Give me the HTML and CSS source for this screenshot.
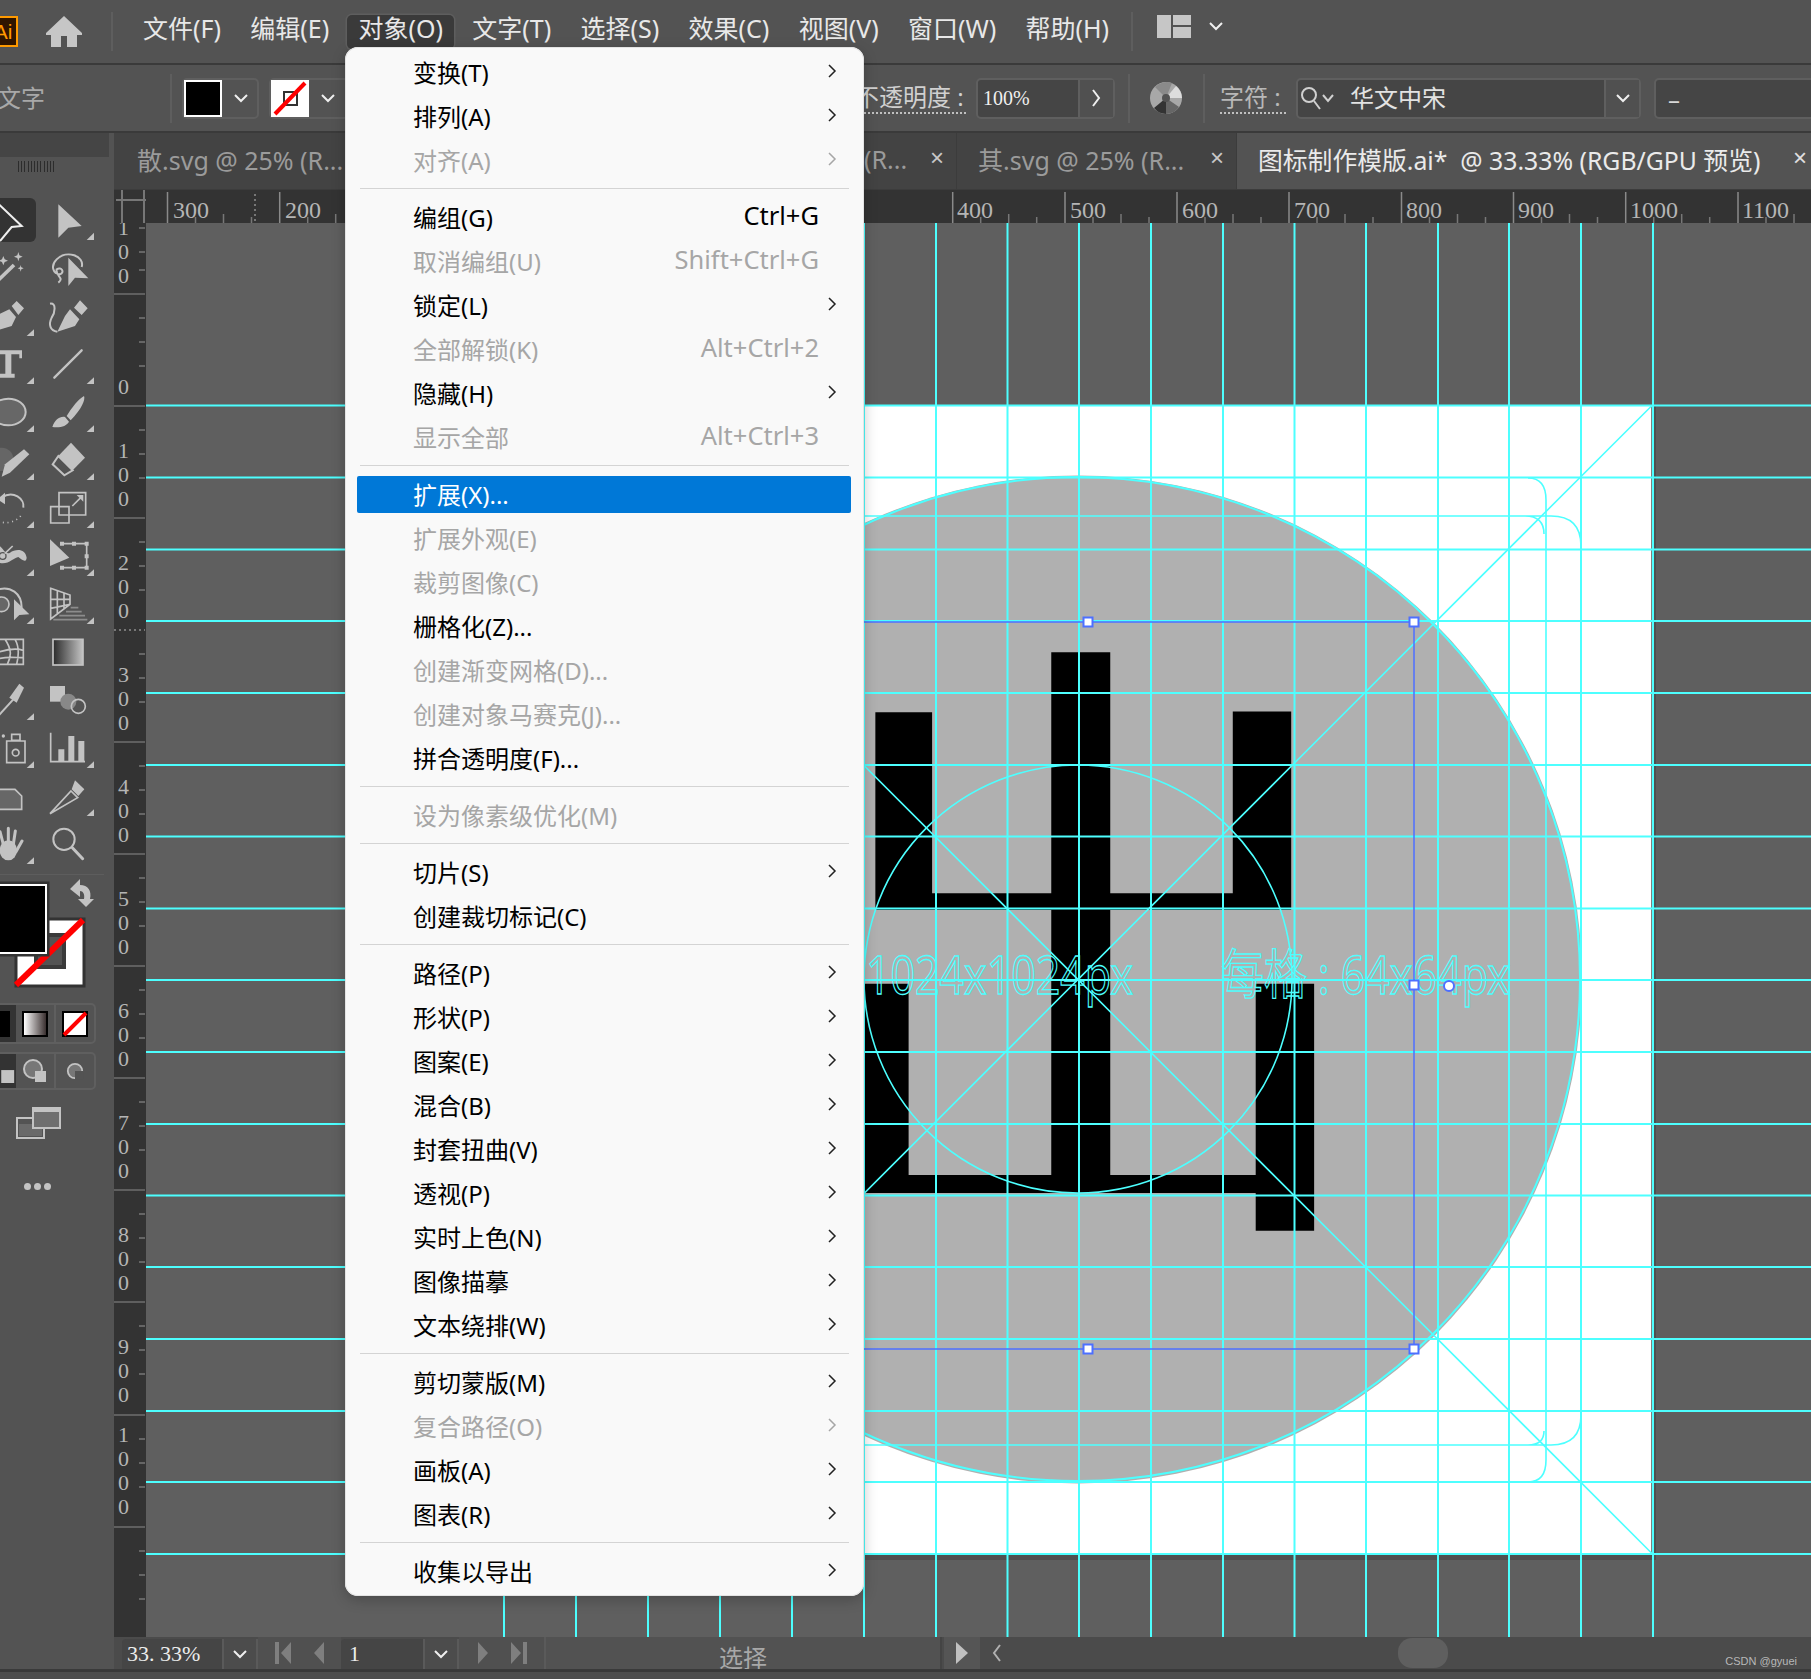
FILE: index.html
```html
<!DOCTYPE html>
<html lang="zh-CN">
<head>
<meta charset="utf-8">
<title>Illustrator</title>
<link rel="stylesheet" href="styles.css">
</head>
<body>
<div class="app">
  <svg class="defs" width="0" height="0"><filter id="glyph-shape" x="-10%" y="-10%" width="120%" height="120%"><feMorphology operator="erode" radius="0 16" result="a"/><feMorphology in="a" operator="dilate" radius="7 0"/></filter></svg>
  <header class="menubar">
    <div class="ai-logo"><span>Ai</span></div>
    <svg class="home" viewBox="0 0 36 31"><path d="M18 0 36 17 V19 H31 V31 H21 V20 H15 V31 H5 V19 H0 V17Z"/></svg>
    <span class="vdiv tall"></span>
    <nav class="menus">
      <span>文件(F)</span><span>编辑(E)</span><span class="open">对象(O)</span><span>文字(T)</span><span>选择(S)</span><span>效果(C)</span><span>视图(V)</span><span>窗口(W)</span><span>帮助(H)</span>
    </nav>
    <span class="vdiv tall after-menus"></span>
    <svg class="layout" viewBox="0 0 34 23"><path d="M0 0H14V23H0ZM16 0H34V10H16ZM16 12H34V23H16Z"/></svg>
    <svg class="chev top-chev" viewBox="0 0 14 9"><path d="M1 1 7 7 13 1"/></svg>
  </header>

  <section class="controlbar">
    <span class="ctl-text">文字</span>
    <span class="vdiv ctl-div first"></span>
    <div class="swatch-group">
      <span class="swatch fill-black"></span>
      <svg class="chev" viewBox="0 0 14 9"><path d="M1 1 7 7 13 1"/></svg>
    </div>
    <div class="swatch-group stroke-group">
      <svg class="swatch-svg" viewBox="0 0 38 37"><rect width="38" height="37" fill="#fff"/><rect x="13" y="12" width="13" height="13" fill="none" stroke="#333" stroke-width="2"/><path d="M4 34 34 3" stroke="#f00" stroke-width="4"/></svg>
      <svg class="chev" viewBox="0 0 14 9"><path d="M1 1 7 7 13 1"/></svg>
    </div>
    <span class="ctl-label opacity-label"><span>不透明度 :</span></span>
    <div class="field opacity-field">
      <span class="field-value">100%</span>
      <span class="field-btn"><svg class="chev-r" viewBox="0 0 9 18"><path d="M1 1 7 9 1 17"/></svg></span>
    </div>
    <span class="vdiv ctl-div"></span>
    <svg class="globe" viewBox="0 0 32 32">
      <circle cx="16" cy="16" r="16" fill="#a8a8a8"/>
      <path d="M16 16 L4 26 A16 16 0 0 0 16 32Z" fill="#333"/>
      <path d="M16 16 L32 16 A16 16 0 0 0 26 4Z" fill="#ddd"/>
      <path d="M16 16 L16 32 A16 16 0 0 0 29 25Z" fill="#666"/>
      <path d="M16 16 L5 5 A16 16 0 0 1 22 1Z" fill="#8a8a8a"/>
      <circle cx="16" cy="16" r="4" fill="#535353"/>
    </svg>
    <span class="vdiv ctl-div"></span>
    <span class="ctl-label char-label"><span>字符 :</span></span>
    <div class="field font-field">
      <svg class="search" viewBox="0 0 36 24"><circle cx="9" cy="9" r="7"/><path d="M14 15 20 23M23 9 28 15 33 9"/></svg>
      <span class="font-name">华文中宋</span>
      <span class="field-btn"><svg class="chev" viewBox="0 0 14 9"><path d="M1 1 7 7 13 1"/></svg></span>
    </div>
    <div class="field style-field"><span class="dash">–</span></div>
  </section>

  <div class="workspace">
    <aside class="toolbar">
      <div class="tool-head"></div>
      <div class="grip"></div>
      <div class="tools">
        <div class="tool selected"><svg viewBox="-66 21 174 132"><path class="ln light" d="M-14 30 65 105 35 108 0 150"/></svg></div>
        <div class="tool"><svg viewBox="114 21 174 132"><path class="fl" d="M175 40 245 105 205 110 175 140Z"/><path class="fl" d="M282 125V147H260Z"/></svg></div>

        <div class="tool"><svg viewBox="-66 165 174 132"><path class="ln thick" d="M-8 270 42 222"/><path class="fl" d="M10 195 14 205 24 209 14 213 10 223 6 213-4 209 6 205ZM55 183 58 193 68 197 58 201 55 211 52 201 42 197 52 193ZM62 222 64 229 71 232 64 235 62 242 60 235 53 232 60 229Z"/></svg></div>
        <div class="tool"><svg viewBox="114 165 174 132"><path class="ln" d="M245 228C255 195 200 175 170 205 150 225 160 250 180 250 195 245 185 225 170 235 165 255 195 260 175 275"/><path class="fl" d="M205 200 265 262 225 260 205 285Z"/></svg></div>

        <div class="tool"><svg viewBox="-66 309 174 132"><path class="fl" d="M35 345 50 330 72 352 55 372ZM-15 375 28 355 48 378 35 405-15 420Z"/><path class="fl" d="M102 415V435H80Z"/></svg></div>
        <div class="tool"><svg viewBox="114 309 174 132"><path class="fl" d="M222 350 240 328 263 352 245 372ZM210 355 238 385 225 405 172 422 195 375Z"/><path class="ln" d="M150 338C170 335 165 365 155 380 145 400 150 420 172 422"/></svg></div>

        <div class="tool"><svg viewBox="-66 453 174 132"><path class="fl" d="M-20 478H66V502H58V490H34V548H44V560H-5V548H16V490H-5V502H-20Z"/><path class="fl" d="M102 559V579H80Z"/></svg></div>
        <div class="tool"><svg viewBox="114 453 174 132"><path class="ln round" d="M163 560 245 478"/><path class="fl" d="M282 559V579H260Z"/></svg></div>

        <div class="tool"><svg viewBox="-66 597 174 132"><ellipse class="ln-fill" cx="25" cy="663" rx="52" ry="40"/><path class="fl" d="M102 703V723H80Z"/></svg></div>
        <div class="tool"><svg viewBox="114 597 174 132"><path class="fl" d="M157 708C165 685 180 675 195 678L207 692C200 705 180 712 157 708ZM200 675C215 650 235 625 252 615 257 625 245 655 212 688Z"/><path class="fl" d="M282 703V723H260Z"/></svg></div>

        <div class="tool"><svg viewBox="-66 741 174 132"><circle class="gray" cx="5" cy="805" r="35"/><path class="fl" d="M5 857 15 820 72 775 88 790 30 845Z"/><path class="fl" d="M102 847V867H80Z"/></svg></div>
        <div class="tool"><svg viewBox="114 741 174 132"><path class="fl" d="M213 755 255 800 218 838 175 795Z"/><path class="ln" d="M175 795 218 838 193 853 158 820Z"/><path class="fl" d="M282 847V867H260Z"/></svg></div>

        <div class="tool"><svg viewBox="-66 885 174 132"><path class="ln" d="M5 920C40 895 75 925 70 950"/><path class="fl" d="M-8 925 15 905V940Z"/><path class="ln dots" d="M62 975C45 995 15 1000-5 990"/><path class="fl" d="M102 991V1011H80Z"/></svg></div>
        <div class="tool"><svg viewBox="114 885 174 132"><path class="ln thin" d="M152 947H207V996H152ZM177 905H257V972H177Z"/><path class="ln thin" d="M217 945 243 919"/><path class="fl" d="M250 912V932L230 912Z"/><path class="fl" d="M282 991V1011H260Z"/></svg></div>

        <div class="tool"><svg viewBox="-66 1029 174 132"><path class="fl" d="M-10 1062C5 1060 15 1095 30 1085 45 1075 75 1070 80 1100 78 1118 65 1105 55 1098 40 1100 20 1128-10 1112Z"/><circle class="gray-ln" cx="8" cy="1095" r="10"/><path class="ln thin" d="M14 1088 38 1065"/><path class="fl" d="M102 1135V1155H80Z"/></svg></div>
        <div class="tool"><svg viewBox="114 1029 174 132"><path class="fl" d="M150 1045 208 1100 150 1125Z"/><path class="ln thin" d="M185 1058H260V1130H185"/><path class="fl" d="M180 1052H192V1064H180ZM216 1052H228V1064H216ZM254 1052H266V1064H254ZM254 1090H266V1102H254ZM254 1124H266V1136H254ZM216 1124H228V1136H216ZM180 1124H192V1136H180Z"/><path class="fl" d="M282 1135V1155H260Z"/></svg></div>

        <div class="tool"><svg viewBox="-66 1173 174 132"><path class="ln" d="M-5 1195C30 1185 65 1205 65 1250"/><circle class="ln-fill thin" cx="5" cy="1240" r="22"/><path class="fl" d="M42 1225 88 1270 58 1272 42 1288Z"/><path class="fl" d="M102 1279V1299H80Z"/></svg></div>
        <div class="tool"><svg viewBox="114 1173 174 132"><path class="ln thin" d="M152 1192 210 1212V1240L152 1284ZM172 1198V1268M192 1205V1254M152 1225 210 1225M152 1252 210 1240"/><path class="ln thin gray-s" d="M212 1250H235M198 1262H245M178 1274H255M160 1286H262"/><path class="fl" d="M282 1279V1299H260Z"/></svg></div>

        <div class="tool"><svg viewBox="-66 1317 174 132"><path class="ln thin" d="M-10 1345H70V1420H-10ZM-10 1385C20 1375 45 1370 70 1378M15 1345C35 1375 35 1395 22 1420M-10 1405C15 1395 45 1400 70 1400M45 1345C60 1370 55 1400 50 1420"/></svg></div>
        <div class="tool"><svg viewBox="114 1317 174 132"><defs><linearGradient id="gr"><stop offset="0" stop-color="#2a2a2a"/><stop offset="1" stop-color="#c4c4c4"/></linearGradient></defs><rect x="159" y="1345" width="90" height="77" fill="url(#gr)" stroke="#c3c3c3" stroke-width="5"/></svg></div>

        <div class="tool"><svg viewBox="-66 1461 174 132"><path class="ln" d="M-8 1578 40 1525"/><path class="fl" d="M28 1520 58 1478 72 1490 50 1535Z"/><path class="fl" d="M102 1567V1587H80Z"/></svg></div>
        <div class="tool"><svg viewBox="114 1461 174 132"><path class="fl" d="M150 1485H195V1532H150Z"/><circle class="gray2" cx="205" cy="1532" r="24"/><circle class="ln-fill thin none" cx="235" cy="1546" r="21"/></svg></div>

        <div class="tool"><svg viewBox="-66 1605 174 132"><path class="ln thin" d="M20 1650H75V1715H20ZM35 1630H60V1648H35Z"/><circle class="ln-fill thin none" cx="47" cy="1685" r="10"/><circle class="light-f" cx="10" cy="1635" r="5"/><path class="fl" d="M102 1711V1731H80Z"/></svg></div>
        <div class="tool"><svg viewBox="114 1605 174 132"><path class="ln thin" d="M152 1625V1712H255"/><path class="fl" d="M175 1675H193V1712H175ZM205 1635H223V1712H205ZM235 1650H253V1712H235Z"/><path class="fl" d="M282 1711V1731H260Z"/></svg></div>

        <div class="tool"><svg viewBox="-66 1749 174 132"><path class="ln-fill thin" d="M-10 1795H45L65 1815V1855H-10Z"/></svg></div>
        <div class="tool"><svg viewBox="114 1749 174 132"><path class="fl" d="M225 1768 253 1795 235 1815 215 1795Z"/><path class="ln thin" d="M213 1800 233 1820 150 1868Z"/><path class="fl" d="M282 1855V1875H260Z"/></svg></div>

        <div class="tool"><svg viewBox="-66 1893 174 132"><ellipse class="light-f" cx="25" cy="1978" rx="26" ry="30"/><path class="ln round wide" d="M10 1960 0 1922M25 1960V1912M40 1960 46 1920M48 1982 66 1950"/><path class="fl" d="M102 1999V2019H80Z"/></svg></div>
        <div class="tool"><svg viewBox="114 1893 174 132"><circle class="ln-fill none" cx="192" cy="1945" r="32"/><path class="ln round wide" d="M217 1970 248 2003"/></svg></div>
      </div>
      <div class="tool-sep"></div>
      <svg class="fillstroke" viewBox="0 0 109 116">
        <path class="swap" d="M70 14 80 4V10C88 10 92 16 90 24H94L86 32 78 24H84C85 19 83 16 80 16V22Z"/>
        <rect x="16" y="44" width="68" height="67" fill="#fff" stroke="#333" stroke-width="3"/>
        <rect x="36" y="60" width="28" height="32" fill="#535353" stroke="#3a3a3a" stroke-width="4"/>
        <path d="M16 110 83 45" stroke="#f00" stroke-width="6"/>
        <rect x="-4" y="8" width="52" height="72" fill="#000" stroke="#333" stroke-width="3"/>
        <rect x="-4" y="10" width="50" height="68" fill="#000" stroke="#fff" stroke-width="2"/>
      </svg>
      <div class="mode-row">
        <span class="mode active"><i class="black-dot"></i></span>
        <span class="mode"><i class="grad-dot"></i></span>
        <span class="mode"><svg class="none-dot" viewBox="0 0 26 26"><rect x="1" y="1" width="24" height="24" fill="#fff" stroke="#000" stroke-width="2"/><path d="M2 24 24 2" stroke="#f00" stroke-width="4"/></svg></span>
      </div>
      <div class="mode-row second">
        <span class="mode active"><svg viewBox="0 0 26 26" class="dm"><path class="fl" d="M10 12H24V26H10Z"/></svg></span>
        <span class="mode"><svg viewBox="0 0 24 24" class="dm"><circle class="gray2-ln" cx="10" cy="10" r="9"/><path class="fl" d="M12 12H23V23H12Z"/></svg></span>
        <span class="mode"><svg viewBox="0 0 20 20" class="dm small"><circle class="gray2-ln" cx="10" cy="10" r="8"/><path d="M10 10H19V19H10Z" fill="#535353"/></svg></span>
      </div>
      <svg class="screenmode" viewBox="0 0 45 32"><path class="ln-s" d="M1 11H28V31H1Z"/><path d="M3 17H26V29H3Z" fill="#6a6a6a"/><path d="M17 1H44V21H17Z" fill="#6f6f6f" stroke="#c3c3c3" stroke-width="2"/><path d="M17 1H44V5H17Z" fill="#c3c3c3"/></svg>
      <div class="more"><i></i><i></i><i></i></div>
    </aside>

    <main class="document">
      <div class="tabs">
        <div class="tab tab-a"><span class="tab-name">散.svg @ 25% (R...</span></div>
        <div class="tab tab-b"><span class="tab-name">(R...</span><span class="tab-x">×</span></div>
        <div class="tab tab-c"><span class="tab-name">其.svg @ 25% (R...</span><span class="tab-x">×</span></div>
        <div class="tab tab-active"><span class="tab-name">图标制作模版.ai*  @ 33.33% (RGB/GPU 预览)</span><span class="tab-x">×</span></div>
      </div>

      <div class="viewport">
        <svg class="ruler-corner" viewBox="0 0 32 33"><path d="M2 10H32M8 0V33M30 0V33" stroke="#777" stroke-width="2"/></svg>
        <svg class="ruler-top" viewBox="146 0 1665 33">
          <path class="tick-major" d="M167.5 2V33M279.7 2V33M392 2V33M504 2V33M616 2V33M728 2V33M840.5 2V33M952.7 2V33M1065 2V33M1177 2V33M1289 2V33M1401.5 2V33M1513.5 2V33M1625.7 2V33M1738 2V33"/>
          <path class="tick-minor" d="M195.5 27V33M223.5 24V33M251.5 27V33M307.7 27V33M335.7 24V33M980.7 27V33M1008.7 24V33M1036.7 27V33M1093 27V33M1121 24V33M1149 27V33M1205 27V33M1233 24V33M1261 27V33M1317 27V33M1345 24V33M1373 27V33M1429.5 27V33M1457.5 24V33M1485.5 27V33M1541.5 27V33M1569.5 24V33M1597.5 27V33M1653.7 27V33M1681.7 24V33M1709.7 27V33M1766 27V33M1794 24V33"/>
          <path class="tick-dot" d="M255 4V33"/>
          <g class="ruler-label top-label">
            <text x="173" y="28">300</text><text x="285" y="28">200</text>
            <text x="957" y="28">400</text><text x="1070" y="28">500</text><text x="1182" y="28">600</text><text x="1294" y="28">700</text><text x="1406" y="28">800</text><text x="1518" y="28">900</text><text x="1630" y="28">1000</text><text x="1742" y="28">1100</text>
          </g>
        </svg>
        <svg class="ruler-left" viewBox="0 223 32 1414">
          <path class="tick-major" d="M0 294H31M0 406H31M0 518H31M0 742H31M0 854H31M0 966H31M0 1078H31M0 1190H31M0 1302H31M0 1415H31M0 1527H31"/>
          <path class="tick-dot" d="M0 630H31"/>
          <path class="tick-minor" d="M25 228H31M25 252H31M25 270H31M25 318H31M25 342H31M25 366H31M25 430H31M25 454H31M25 478H31M25 542H31M25 566H31M25 590H31M25 654H31M25 678H31M25 702H31M25 766H31M25 790H31M25 814H31M25 878H31M25 902H31M25 926H31M25 990H31M25 1014H31M25 1038H31M25 1102H31M25 1126H31M25 1150H31M25 1214H31M25 1238H31M25 1262H31M25 1326H31M25 1350H31M25 1374H31M25 1439H31M25 1463H31M25 1487H31M25 1551H31M25 1575H31M25 1599H31"/>
          <g class="ruler-label">
            <text y="235"><tspan x="4">1</tspan><tspan x="4" dy="24">0</tspan><tspan x="4" dy="24">0</tspan></text>
            <text x="4" y="394">0</text>
            <text y="458"><tspan x="4">1</tspan><tspan x="4" dy="24">0</tspan><tspan x="4" dy="24">0</tspan></text>
            <text y="570"><tspan x="4">2</tspan><tspan x="4" dy="24">0</tspan><tspan x="4" dy="24">0</tspan></text>
            <text y="682"><tspan x="4">3</tspan><tspan x="4" dy="24">0</tspan><tspan x="4" dy="24">0</tspan></text>
            <text y="794"><tspan x="4">4</tspan><tspan x="4" dy="24">0</tspan><tspan x="4" dy="24">0</tspan></text>
            <text y="906"><tspan x="4">5</tspan><tspan x="4" dy="24">0</tspan><tspan x="4" dy="24">0</tspan></text>
            <text y="1018"><tspan x="4">6</tspan><tspan x="4" dy="24">0</tspan><tspan x="4" dy="24">0</tspan></text>
            <text y="1130"><tspan x="4">7</tspan><tspan x="4" dy="24">0</tspan><tspan x="4" dy="24">0</tspan></text>
            <text y="1242"><tspan x="4">8</tspan><tspan x="4" dy="24">0</tspan><tspan x="4" dy="24">0</tspan></text>
            <text y="1354"><tspan x="4">9</tspan><tspan x="4" dy="24">0</tspan><tspan x="4" dy="24">0</tspan></text>
            <text y="1442"><tspan x="4">1</tspan><tspan x="4" dy="24">0</tspan><tspan x="4" dy="24">0</tspan><tspan x="4" dy="24">0</tspan></text>
          </g>
        </svg>

        <div class="canvas">
          <svg class="layer" viewBox="146 223 1665 1414">
            <rect x="504" y="406" width="1152" height="1154" fill="#4f4f4f"/>
            <rect x="504" y="405.5" width="1148" height="1148" fill="#fff" stroke="#000" stroke-width="1"/>
            <circle cx="1078" cy="979.5" r="504" fill="#b0b0b0"/>
          </svg>
          <div class="glyph">出</div>
          <svg class="layer guides" viewBox="146 223 1665 1414">
            <path class="g" d="M504 223V1637M576 223V1637M648 223V1637M720 223V1637M792 223V1637M864 223V1637M936 223V1637M1007.5 223V1637M1079 223V1637M1151 223V1637M1223 223V1637M1294.5 223V1637M1366 223V1637M1438 223V1637M1509 223V1637M1581 223V1637M1653 223V1637"/>
            <path class="g" d="M146 405.5H1811M146 477.5H1811M146 549.5H1811M146 621H1811M146 693H1811M146 765H1811M146 836.5H1811M146 908.5H1811M146 980H1811M146 1052H1811M146 1124H1811M146 1195.5H1811M146 1267H1811M146 1339H1811M146 1411H1811M146 1482H1811M146 1554H1811"/>
            <path class="g thin" d="M504 405.5 1652 1553.5M1652 405.5 504 1553.5"/>
            <circle class="g" cx="1078" cy="979" r="502"/>
            <circle class="g thin" cx="1078" cy="979" r="214"/>
            <path class="g thin" d="M610 516H1551Q1581 516 1581 546V1415Q1581 1445 1551 1445H610M1528 478Q1546 478 1546 500V1460Q1546 1482 1528 1482M1525 516Q1544 516 1544 534M1528 1445Q1544 1445 1544 1431"/>
            <text class="outline-text" x="866" y="994" textLength="267" lengthAdjust="spacingAndGlyphs">1024x1024px</text>
            <text class="outline-text" x="1221" y="994" textLength="289" lengthAdjust="spacingAndGlyphs">每格 : 64x64px</text>
            <path class="sel" d="M762 622H1414V1349H762"/>
            <rect class="handle" x="1083.5" y="617.5" width="9" height="9"/>
            <rect class="handle" x="1409.5" y="617.5" width="9" height="9"/>
            <rect class="handle" x="1083.5" y="1344.5" width="9" height="9"/>
            <rect class="handle" x="1409.5" y="1344.5" width="9" height="9"/>
            <rect class="handle" x="1409.5" y="980.5" width="9" height="9"/>
            <circle class="handle" cx="1449" cy="986" r="5"/>
          </svg>
        </div>
      </div>

      <footer class="statusbar">
        <div class="st-field zoom-field"><span>33. 33%</span></div>
        <div class="st-drop"><svg class="chev" viewBox="0 0 14 9"><path d="M1 1 7 7 13 1"/></svg></div>
        <div class="st-nav">
          <svg viewBox="0 0 20 24"><path d="M2 1H6V23H2ZM18 1V23L8 12Z"/></svg>
          <svg viewBox="0 0 12 24"><path d="M11 1V23L1 12Z"/></svg>
        </div>
        <div class="st-field page-field"><span>1</span></div>
        <div class="st-drop"><svg class="chev" viewBox="0 0 14 9"><path d="M1 1 7 7 13 1"/></svg></div>
        <div class="st-nav right">
          <svg viewBox="0 0 12 24"><path d="M1 1V23L11 12Z"/></svg>
          <svg viewBox="0 0 20 24"><path d="M2 1V23L12 12ZM14 1H18V23H14Z"/></svg>
        </div>
        <div class="st-info">选择</div>
        <div class="st-play"><svg viewBox="0 0 14 24"><path d="M1 1V23L13 12Z"/></svg></div>
        <div class="st-scroll">
          <svg class="st-left" viewBox="0 0 9 18"><path d="M8 1 2 9 8 17"/></svg>
          <span class="st-thumb"></span>
          <span class="watermark">CSDN @gyuei</span>
        </div>
      </footer>
    </main>
  </div>
  <div class="bottom-strip"></div>

  <div class="dropdown">
    <div class="mi"><span class="mt">变换(T)</span><svg class="ar" viewBox="0 0 9 14"><path d="M1 1 7 7 1 13"/></svg></div>
    <div class="mi"><span class="mt">排列(A)</span><svg class="ar" viewBox="0 0 9 14"><path d="M1 1 7 7 1 13"/></svg></div>
    <div class="mi off"><span class="mt">对齐(A)</span><svg class="ar" viewBox="0 0 9 14"><path d="M1 1 7 7 1 13"/></svg></div>
    <div class="sep"></div>
    <div class="mi"><span class="mt">编组(G)</span><span class="mk">Ctrl+G</span></div>
    <div class="mi off"><span class="mt">取消编组(U)</span><span class="mk">Shift+Ctrl+G</span></div>
    <div class="mi"><span class="mt">锁定(L)</span><svg class="ar" viewBox="0 0 9 14"><path d="M1 1 7 7 1 13"/></svg></div>
    <div class="mi off"><span class="mt">全部解锁(K)</span><span class="mk">Alt+Ctrl+2</span></div>
    <div class="mi"><span class="mt">隐藏(H)</span><svg class="ar" viewBox="0 0 9 14"><path d="M1 1 7 7 1 13"/></svg></div>
    <div class="mi off"><span class="mt">显示全部</span><span class="mk">Alt+Ctrl+3</span></div>
    <div class="sep"></div>
    <div class="mi hot"><span class="mt">扩展(X)...</span></div>
    <div class="mi off"><span class="mt">扩展外观(E)</span></div>
    <div class="mi off"><span class="mt">裁剪图像(C)</span></div>
    <div class="mi"><span class="mt">栅格化(Z)...</span></div>
    <div class="mi off"><span class="mt">创建渐变网格(D)...</span></div>
    <div class="mi off"><span class="mt">创建对象马赛克(J)...</span></div>
    <div class="mi"><span class="mt">拼合透明度(F)...</span></div>
    <div class="sep"></div>
    <div class="mi off"><span class="mt">设为像素级优化(M)</span></div>
    <div class="sep"></div>
    <div class="mi"><span class="mt">切片(S)</span><svg class="ar" viewBox="0 0 9 14"><path d="M1 1 7 7 1 13"/></svg></div>
    <div class="mi"><span class="mt">创建裁切标记(C)</span></div>
    <div class="sep"></div>
    <div class="mi"><span class="mt">路径(P)</span><svg class="ar" viewBox="0 0 9 14"><path d="M1 1 7 7 1 13"/></svg></div>
    <div class="mi"><span class="mt">形状(P)</span><svg class="ar" viewBox="0 0 9 14"><path d="M1 1 7 7 1 13"/></svg></div>
    <div class="mi"><span class="mt">图案(E)</span><svg class="ar" viewBox="0 0 9 14"><path d="M1 1 7 7 1 13"/></svg></div>
    <div class="mi"><span class="mt">混合(B)</span><svg class="ar" viewBox="0 0 9 14"><path d="M1 1 7 7 1 13"/></svg></div>
    <div class="mi"><span class="mt">封套扭曲(V)</span><svg class="ar" viewBox="0 0 9 14"><path d="M1 1 7 7 1 13"/></svg></div>
    <div class="mi"><span class="mt">透视(P)</span><svg class="ar" viewBox="0 0 9 14"><path d="M1 1 7 7 1 13"/></svg></div>
    <div class="mi"><span class="mt">实时上色(N)</span><svg class="ar" viewBox="0 0 9 14"><path d="M1 1 7 7 1 13"/></svg></div>
    <div class="mi"><span class="mt">图像描摹</span><svg class="ar" viewBox="0 0 9 14"><path d="M1 1 7 7 1 13"/></svg></div>
    <div class="mi"><span class="mt">文本绕排(W)</span><svg class="ar" viewBox="0 0 9 14"><path d="M1 1 7 7 1 13"/></svg></div>
    <div class="sep"></div>
    <div class="mi"><span class="mt">剪切蒙版(M)</span><svg class="ar" viewBox="0 0 9 14"><path d="M1 1 7 7 1 13"/></svg></div>
    <div class="mi off"><span class="mt">复合路径(O)</span><svg class="ar" viewBox="0 0 9 14"><path d="M1 1 7 7 1 13"/></svg></div>
    <div class="mi"><span class="mt">画板(A)</span><svg class="ar" viewBox="0 0 9 14"><path d="M1 1 7 7 1 13"/></svg></div>
    <div class="mi"><span class="mt">图表(R)</span><svg class="ar" viewBox="0 0 9 14"><path d="M1 1 7 7 1 13"/></svg></div>
    <div class="sep"></div>
    <div class="mi"><span class="mt">收集以导出</span><svg class="ar" viewBox="0 0 9 14"><path d="M1 1 7 7 1 13"/></svg></div>
  </div>
</div>
</body>
</html>
```

FILE: styles.css
```css
* { box-sizing: border-box; }
html, body { margin: 0; padding: 0; background: #535353; }
body { font-family: "Noto Sans", "Noto Sans CJK SC", sans-serif; }
.app { position: relative; width: 1811px; height: 1679px; overflow: hidden; display: flex; flex-direction: column; background: #535353; }
.defs { position: absolute; }

/* shared icon bits */
.chev { width: 14px; height: 9px; fill: none; stroke: #efefef; stroke-width: 2; flex: none; }
.chev-r { width: 9px; height: 18px; fill: none; stroke: #efefef; stroke-width: 2; }
.vdiv { display: block; width: 2px; background: #5e5e5e; flex: none; }

/* menu bar */
.menubar { flex: none; height: 65px; border-bottom: 2px solid #3a3a3a; display: flex; align-items: center; background: #535353; padding-bottom: 0; }
.ai-logo { flex: none; width: 30px; height: 31px; margin-left: -12px; background: #2f1500; border: 2px solid #ff9a00; display: flex; align-items: center; justify-content: center; }
.ai-logo span { color: #ff9a00; font: 21px/1 "Liberation Sans", sans-serif; }
.home { flex: none; width: 36px; height: 31px; margin-left: 28px; fill: #c6c6c6; }
.vdiv.tall { height: 39px; margin-left: 29px; }
.menus { display: flex; gap: 7.3px; margin-left: 19px; color: #e8e8e8; font-size: 25px; line-height: 27px; }
.menus span { padding: 0 11px 7px; height: 34px; display: block; white-space: nowrap; }
.menus .open { background: #3a3a3a; border-radius: 5px; box-shadow: 0 0 0 1.5px #5e5e5e; }
.vdiv.after-menus { margin-left: 11px; }
.layout { flex: none; width: 34px; height: 23px; margin-left: 24px; margin-top: -10px; fill: #c6c6c6; }
.top-chev { margin-left: 18px; margin-top: -10px; }

/* control bar */
.controlbar { flex: none; height: 68px; border-bottom: 2px solid #3a3a3a; display: flex; align-items: center; background: #535353; color: #d0d0d0; font-size: 24px; white-space: nowrap; }
.ctl-text { margin-left: -3px; color: #a8a8a8; width: 46px; flex: none; padding-bottom: 4px; }
.ctl-div { height: 49px; margin-left: 13px; }
.ctl-div.first { margin-left: 127px; }
.swatch-group { flex: none; display: flex; align-items: center; height: 41px; width: 77px; margin-left: 10px; border: 2px solid #5f5f5f; border-radius: 5px; gap: 12px; }
.swatch { display: block; width: 38px; height: 37px; border: 2px solid #fff; background: #000; flex: none; }
.swatch-svg { width: 38px; height: 37px; flex: none; }
.stroke-group { width: 80px; }
.ctl-label { border-bottom: 2px dotted #c0c0c0; flex: none; height: 32px; line-height: 29px; }
.opacity-label { margin-left: 506px; width: 111px; }
.field { flex: none; height: 41px; display: flex; align-items: center; background: #454545; border: 2px solid #5f5f5f; border-radius: 5px; }
.opacity-field { width: 139px; margin-left: 10px; }
.field-value { flex: 1; padding-left: 5px; font: 20px "Liberation Serif", serif; color: #efefef; }
.field-btn { width: 35px; height: 100%; border-left: 2px solid #5f5f5f; display: flex; align-items: center; justify-content: center; background: #505050; }
.globe { flex: none; width: 32px; height: 32px; margin-left: 20px; }
.controlbar .globe + .ctl-div { margin-left: 21px; }
.char-label { margin-left: 15px; width: 66px; color: #b8b8b8; }
.font-field { width: 345px; margin-left: 10px; }
.search { width: 36px; height: 24px; margin-left: 2px; fill: none; stroke: #d0d0d0; stroke-width: 2; flex: none; }
.font-name { flex: 1; margin-left: 14px; color: #e2e2e2; padding-bottom: 4px; }
.style-field { margin-left: 13px; width: 170px; }
.dash { margin-left: 12px; color: #d8d8d8; }

/* workspace */
.workspace { flex: 1; min-height: 0; display: flex; }

/* tool bar */
.toolbar { flex: none; width: 109px; background: #535353; overflow: hidden; }
.tool-head { height: 24px; background: #454545; }
.grip { height: 11px; margin: 4px 0 0 18px; width: 38px; background: repeating-linear-gradient(90deg, #2c2c2c 0 1px, #535353 1px 3.2px); }
.tools { display: grid; grid-template-columns: 58px 58px; column-gap: 2px; row-gap: 4px; margin: 26px 0 0 -22px; }
.tool { height: 44px; border-radius: 6px; }
.tool.selected { background: #333; }
.tool svg { display: block; width: 58px; height: 44px; }
.fl { fill: #c3c3c3; }
.ln { fill: none; stroke: #c3c3c3; stroke-width: 6; stroke-linejoin: miter; }
.ln.light { stroke: #efefef; }
.ln.thick { stroke-width: 11; }
.ln.thin { stroke-width: 5; }
.ln.round { stroke-width: 7; stroke-linecap: round; }
.ln.wide { stroke-width: 9; stroke-linecap: round; }
.ln.dots { stroke-dasharray: 3 11; stroke-width: 5; }
.ln.gray-s { stroke: #8c8c8c; }
.ln-fill { fill: #676767; stroke: #c3c3c3; stroke-width: 6; }
.ln-fill.thin { stroke-width: 5; }
.ln-fill.none { fill: none; }
.gray { fill: #666; }
.gray2 { fill: #888; }
.gray-ln { fill: none; stroke: #535353; stroke-width: 4; }
.light-f { fill: #c3c3c3; }
.tool-sep { height: 1px; margin: 8px 5px 0 0; background: #5d5d5d; }
.fillstroke { display: block; width: 109px; height: 116px; margin-top: 0; }
.swap { fill: #c3c3c3; }
.mode-row { display: flex; width: 100px; height: 41px; margin: 12px 0 0 -4px; border: 2px solid #5f5f5f; border-radius: 5px; }
.mode-row.second { margin-top: 8px; height: 38px; }
.mode { flex: 1; display: flex; align-items: center; justify-content: center; border-right: 2px solid #5f5f5f; }
.mode:last-child { border-right: 0; }
.mode.active { background: #333; border-right: 0; justify-content: flex-start; flex: none; width: 18px; }
.black-dot { display: block; width: 12px; height: 26px; background: #000; margin-left: 0; }
.grad-dot { display: block; width: 26px; height: 26px; border: 2px solid #000; background: linear-gradient(90deg, #fff, #3a3030); }
.none-dot { width: 26px; height: 26px; }
.dm { width: 24px; height: 24px; }
.dm.small { width: 18px; height: 18px; }
.active .dm { margin-left: -6px; }
.gray2-ln { fill: #777; stroke: #c3c3c3; stroke-width: 2; }
.screenmode { display: block; width: 45px; height: 32px; margin: 17px 0 0 16px; }
.ln-s { fill: none; stroke: #c3c3c3; stroke-width: 2; }
.more { display: flex; gap: 3px; margin: 44px 0 0 24px; }
.more i { display: block; width: 7px; height: 7px; border-radius: 50%; background: #c3c3c3; }

/* document */
.document { flex: none; width: 1697px; margin-left: 5px; display: flex; flex-direction: column; min-height: 0; background: #3c3c3c; }
.tabs { flex: none; height: 57px; display: flex; color: #9b9b9b; font-size: 25px; white-space: nowrap; background: #3c3c3c; }
.tab { height: 56px; display: flex; align-items: center; background: #434343; position: relative; padding-left: 21px; margin-right: 1px; overflow: hidden; }
.tab-a { width: 231px; padding-left: 23px; margin-right: 0; }
.tab-b { width: 611px; padding-left: 519px; }
.tab-c { width: 279px; }
.tab-active { flex: 1; margin-right: 0; background: #535353; color: #eaeaea; }
.tab-active .tab-name { font-size: 24.8px; }
.tab-name { white-space: pre; padding-bottom: 4px; }
.tab-x { position: absolute; right: 12px; top: 10px; font: 24px/30px "Liberation Sans", sans-serif; color: #c8c8c8; }
.tab-active .tab-x { right: 4px; color: #e0e0e0; }

.viewport { flex: 1; min-height: 0; display: grid; grid-template-columns: 32px 1fr; grid-template-rows: 33px 1fr; background: #333; }
.ruler-corner { width: 32px; height: 33px; display: block; }
.ruler-top { width: 1665px; height: 33px; display: block; }
.ruler-left { width: 32px; height: 1414px; display: block; }
.tick-major { stroke: #8a8a8a; stroke-width: 1.5; fill: none; }
.ruler-left .tick-major { stroke: #5f5f5f; stroke-width: 2; }
.tick-minor { stroke: #777; stroke-width: 1.5; fill: none; }
.tick-dot { stroke: #777; stroke-width: 2; stroke-dasharray: 2 3; fill: none; }
.ruler-label { font: 22px "Liberation Serif", serif; fill: #b5b5b5; }
.ruler-label.top-label { font-size: 24px; }

.canvas { position: relative; overflow: hidden; background: #5f5f5f; width: 1665px; height: 1414px; }
.layer { position: absolute; left: 0; top: 0; width: 1665px; height: 1414px; display: block; }
.glyph { position: absolute; left: 604px; top: 332px; width: 650px; height: 700px; font: 400 666px/700px "Noto Sans CJK SC", sans-serif; color: #000; text-align: center; transform: scaleX(.86); filter: url(#glyph-shape); }
.g { fill: none; stroke: #4dffff; stroke-width: 2; }
.g.thin { stroke-width: 1.6; }
.outline-text { font: 53px "Noto Sans", "Noto Sans CJK SC", sans-serif; fill: none; stroke: #4dffff; stroke-width: 1.3; }
.sel { fill: none; stroke: #4d6fff; stroke-width: 1.5; }
.handle { fill: #fff; stroke: #4d6fff; stroke-width: 2; }

/* status bar */
.statusbar { flex: none; height: 32px; display: flex; background: #4b4b4b; color: #ececec; font-size: 22px; }
.st-field { background: #454545; height: 30px; margin-top: 2px; border-radius: 4px 0 0 0; display: flex; align-items: center; font-family: "Liberation Serif", serif; }
.zoom-field { width: 100px; margin-left: 8px; padding-left: 5px; }
.page-field { width: 82px; padding-left: 8px; }
.st-drop { width: 36px; height: 30px; margin-top: 2px; display: flex; align-items: center; justify-content: center; background: #4c4c4c; border-left: 2px solid #5a5a5a; border-right: 2px solid #5a5a5a; }
.st-nav { width: 83px; height: 32px; display: flex; align-items: center; justify-content: space-between; padding: 0 16px 0 15px; background: #505050; fill: #7f7f7f; }
.st-nav svg:first-child { width: 20px; height: 24px; }
.st-nav svg:last-child { width: 12px; height: 24px; }
.st-nav.right svg:first-child { width: 12px; height: 24px; }
.st-nav.right svg:last-child { width: 20px; height: 24px; }
.st-nav.right { width: 85px; padding: 0 15px 0 18px; }
.st-info { width: 398px; height: 32px; padding-top: 6px; display: flex; align-items: center; justify-content: center; background: #525252; color: #a8a8a8; font-size: 24px; border-left: 2px solid #5a5a5a; border-right: 2px solid #444; }
.st-play { width: 36px; height: 32px; display: flex; align-items: center; justify-content: center; background: #555; fill: #c0c0c0; margin-left: 2px; }
.st-play svg { width: 14px; height: 24px; }
.st-scroll { flex: 1; position: relative; display: flex; align-items: center; background: #4b4b4b; }
.st-left { width: 9px; height: 18px; margin-left: 12px; fill: none; stroke: #b0b0b0; stroke-width: 2; }
.st-thumb { display: block; width: 50px; height: 30px; margin-left: 397px; border-radius: 14px; background: #5f5f5f; }
.watermark { position: absolute; right: 14px; top: 18px; font: 11px/13px "Liberation Sans", sans-serif; color: #b8b8b8; white-space: nowrap; }
.bottom-strip { flex: none; height: 10px; border-top: 3px solid #3a3a3a; background: #4e4e4e; }

/* dropdown menu */
.dropdown { position: absolute; left: 345px; top: 47px; width: 519px; height: 1549px; padding: 3px 0; background: #f9f9f9; border-radius: 13px; box-shadow: inset 0 0 0 1px #e4e4e4, 0 4px 14px rgba(0,0,0,.22); color: #000; font-size: 24px; }
.mi { height: 44px; padding-left: 68px; padding-bottom: 2px; display: flex; align-items: center; position: relative; white-space: nowrap; }
.mt { flex: 1; }
.mk { margin-right: 45px; font-size: 25.5px; line-height: 1; }
.ar { flex: none; width: 9px; height: 14px; margin-right: 27px; fill: none; stroke: #222; stroke-width: 1.5; }
.mi.off { color: #a6a6a6; }
.mi.off .ar { stroke: #a6a6a6; }
.mi.hot { color: #fff; z-index: 0; }
.mi.hot::before { content: ""; position: absolute; z-index: -1; left: 12px; right: 13px; top: 4px; bottom: 3px; background: #0078d7; border-radius: 2px; }
.sep { height: 1px; margin: 6px 15px 6px 15px; background: #d4d4d4; }
```
